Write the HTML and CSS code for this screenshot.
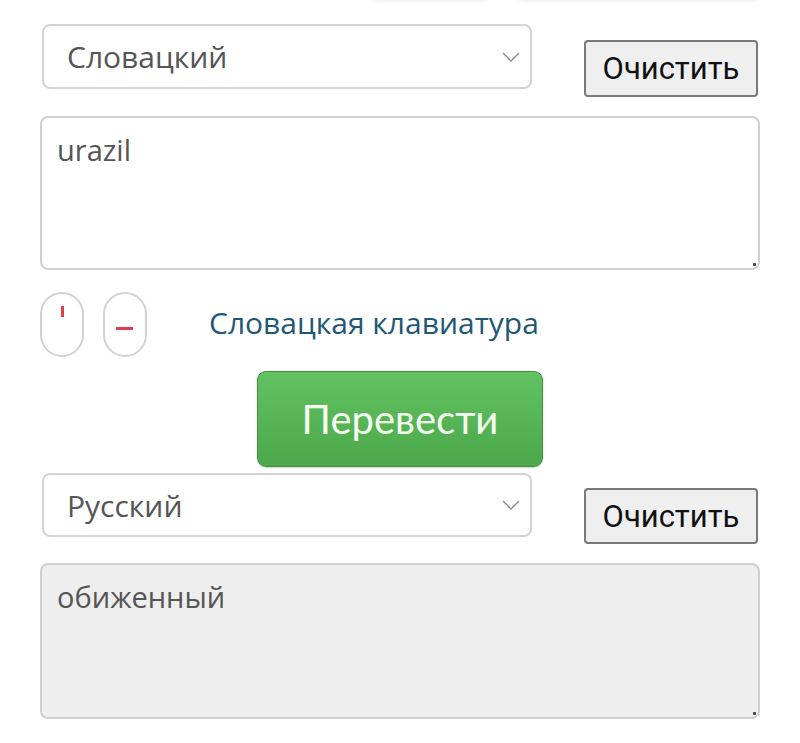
FILE: index.html
```html
<!DOCTYPE html>
<html lang="ru">
<head>
<meta charset="utf-8">
<title>Словацко-русский переводчик</title>
<link rel="stylesheet" href="styles.css">
</head>
<body>
<div class="page">
  <div class="top-tabs">
    <span class="tab tab-a"></span>
    <span class="tab tab-b"></span>
  </div>

  <div class="lang-row">
    <div class="select">
      <span class="select-text">Словацкий</span>
      <svg class="chev" width="18" height="10" viewBox="0 0 18 10"><path d="M1 1 L9 9 L17 1" fill="none" stroke="#888" stroke-width="1.3"/></svg>
    </div>
    <button class="clear">Очистить</button>
  </div>

  <div class="area">
    <textarea class="text-in">urazil</textarea>
    <span class="grip"></span>
  </div>

  <div class="keys-row">
    <button class="key"><span class="mark-v"></span></button>
    <button class="key"><span class="mark-h"></span></button>
    <a class="kbd-link" href="#">Словацкая клавиатура</a>
  </div>

  <div class="go-row">
    <button class="go">Перевести</button>
  </div>

  <div class="lang-row lang-row-2">
    <div class="select">
      <span class="select-text">Русский</span>
      <svg class="chev" width="18" height="10" viewBox="0 0 18 10"><path d="M1 1 L9 9 L17 1" fill="none" stroke="#888" stroke-width="1.3"/></svg>
    </div>
    <button class="clear">Очистить</button>
  </div>

  <div class="area area-out">
    <textarea class="text-out" readonly>обиженный</textarea>
    <span class="grip"></span>
  </div>
</div>
</body>
</html>
```

FILE: styles.css
```css
html, body {
  margin: 0;
  padding: 0;
  background: #ffffff;
}

.page {
  width: 720px;
  margin-left: 40px;
  font-family: "Open Sans", "Noto Sans", sans-serif;
}

.top-tabs {
  height: 0;
  position: relative;
}

.tab {
  position: absolute;
  top: -30px;
  height: 30px;
  border-radius: 8px;
  background: #fff;
  box-shadow: 0 1px 4px rgba(0, 0, 0, 0.08);
}

.tab-a { left: 330px; width: 120px; }
.tab-b { left: 476px; width: 244px; }

.lang-row {
  display: flex;
  align-items: flex-start;
  padding-top: 24px;
}

.lang-row-2 {
  padding-top: 6px;
}

.select {
  box-sizing: border-box;
  width: 490px;
  height: 65px;
  margin-left: 2px;
  border: 2px solid #d4d4d4;
  border-radius: 8px;
  background: #fff;
  display: flex;
  align-items: center;
  justify-content: space-between;
  padding: 0 10px 0 23px;
}

.lang-row-2 .select {
  height: 64px;
}

.select-text {
  font-size: 30px;
  color: #555;
}

.chev {
  display: block;
}

.clear {
  box-sizing: border-box;
  margin-left: 52px;
  margin-top: 16px;
  width: 174px;
  height: 57px;
  border: 2px solid #7a7a7a;
  border-radius: 4px;
  background: #efefef;
  font-family: Roboto, "Noto Sans", sans-serif;
  font-size: 31px;
  color: #111;
  padding: 0;
}

.lang-row-2 .clear {
  margin-top: 15px;
  height: 56px;
}

.area {
  position: relative;
  margin-top: 19px;
}

.area textarea {
  box-sizing: border-box;
  display: block;
  width: 720px;
  height: 154px;
  border: 2px solid #d0d0d0;
  border-radius: 8px;
  padding: 14px 15px;
  font-family: "Open Sans", "Noto Sans", sans-serif;
  font-size: 29px;
  line-height: 36px;
  color: #555;
  background: #fff;
  resize: none;
  outline: none;
}

.area-out textarea {
  height: 156px;
  background: #eeeeee;
}

.grip {
  position: absolute;
  right: 4px;
  bottom: 4px;
  width: 3px;
  height: 3px;
  background: #444;
  border-radius: 1px;
}

.keys-row {
  display: flex;
  align-items: center;
  margin-top: 22px;
}

.key {
  box-sizing: border-box;
  width: 44px;
  height: 65px;
  border: 2px solid #d2d2d2;
  border-radius: 22px;
  background: #fff;
  margin-right: 19px;
  padding: 0;
  position: relative;
}

.mark-v {
  position: absolute;
  left: 19px;
  top: 12px;
  width: 3px;
  height: 11px;
  background: #d8414a;
}

.mark-h {
  position: absolute;
  left: 11px;
  top: 33px;
  width: 17px;
  height: 3px;
  background: #d8414a;
}

.kbd-link {
  margin-left: 43px;
  font-family: "Open Sans", "Noto Sans", sans-serif;
  font-size: 30px;
  color: #1f5876;
  text-decoration: none;
  position: relative;
  top: -2px;
}

.go-row {
  display: flex;
  justify-content: center;
  margin-top: 14px;
}

.go {
  box-sizing: border-box;
  width: 286px;
  height: 96px;
  border: 1px solid #3f9140;
  border-radius: 9px;
  background: linear-gradient(#62c260, #4ca84b);
  color: #f4fff2;
  font-family: Lato, "Open Sans", sans-serif;
  font-size: 40px;
  padding: 0;
  box-shadow: 0 1px 2px rgba(0, 0, 0, 0.2);
}
```
